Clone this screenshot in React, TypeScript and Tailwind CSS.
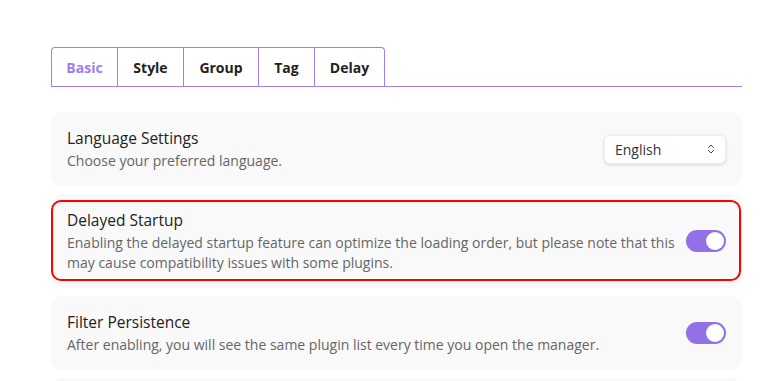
import React from "react";
import { ChevronsUpDown } from "lucide-react";

const tabs = [
  { label: "Basic", w: "w-[65px]", active: true },
  { label: "Style", w: "w-[66px]" },
  { label: "Group", w: "w-[75px]" },
  { label: "Tag", w: "w-[56px]" },
  { label: "Delay", w: "w-[70px]" },
];

const Toggle: React.FC = () => (
  <div className="w-[40px] h-[22px] rounded-full bg-[#9370e8] p-[2px] flex justify-end shrink-0">
    <div className="w-[18px] h-[18px] rounded-full bg-white" />
  </div>
);

const Card: React.FC<{ title: string; desc: string; children: React.ReactNode }> = ({
  title,
  desc,
  children,
}) => (
  <div className="bg-[#f9f9f9] rounded-xl px-4 py-[15px] flex items-center justify-between gap-2">
    <div className="flex flex-col">
      <div className="text-[15.5px] leading-[22px] text-[#222]">{title}</div>
      <div className="text-[14px] leading-[20px] text-[#666] mt-[2px]">{desc}</div>
    </div>
    {children}
  </div>
);

const App: React.FC = () => {
  return (
    <div className="bg-white h-[381px] overflow-hidden font-['Open_Sans',sans-serif]">
      <div className="ml-[51px] w-[691px] pt-[47px]">
        <div className="flex border-b border-[#a07ef0]">
          <div className="flex border border-b-0 border-[#a07ef0] rounded-t-[4px]">
            {tabs.map((t, i) => (
              <div
                key={t.label}
                className={`${t.w} h-[38px] flex items-center justify-center text-[14px] font-bold ${
                  i > 0 ? "border-l border-[#a07ef0]" : ""
                } ${t.active ? "text-[#a07ef0]" : "text-[#222]"}`}
              >
                {t.label}
              </div>
            ))}
          </div>
        </div>

        <div className="flex flex-col gap-2 mt-[25px]">
          <Card title="Language Settings" desc="Choose your preferred language.">
            <div className="w-[122px] h-[29px] bg-white rounded-md shadow-[0_1px_3px_rgba(0,0,0,0.15)] border border-[#eee] flex items-center justify-between pl-[10px] pr-[8px] text-[14px] text-[#333]">
              <span>English</span>
              <ChevronsUpDown className="w-3 h-3 text-[#444]" strokeWidth={2} />
            </div>
          </Card>
          <div className="relative">
            <Card
              title="Delayed Startup"
              desc="Enabling the delayed startup feature can optimize the loading order, but please note that this may cause compatibility issues with some plugins."
            >
              <Toggle />
            </Card>
            <div className="absolute left-0 right-[1px] top-[6px] bottom-[7px] border-2 border-[#ff0000] rounded-[10px] pointer-events-none" />
          </div>
          <Card
            title="Filter Persistence"
            desc="After enabling, you will see the same plugin list every time you open the manager."
          >
            <Toggle />
          </Card>
          <div className="bg-[#f9f9f9] rounded-xl h-[74px]" />
        </div>
      </div>
    </div>
  );
};

export default App;
